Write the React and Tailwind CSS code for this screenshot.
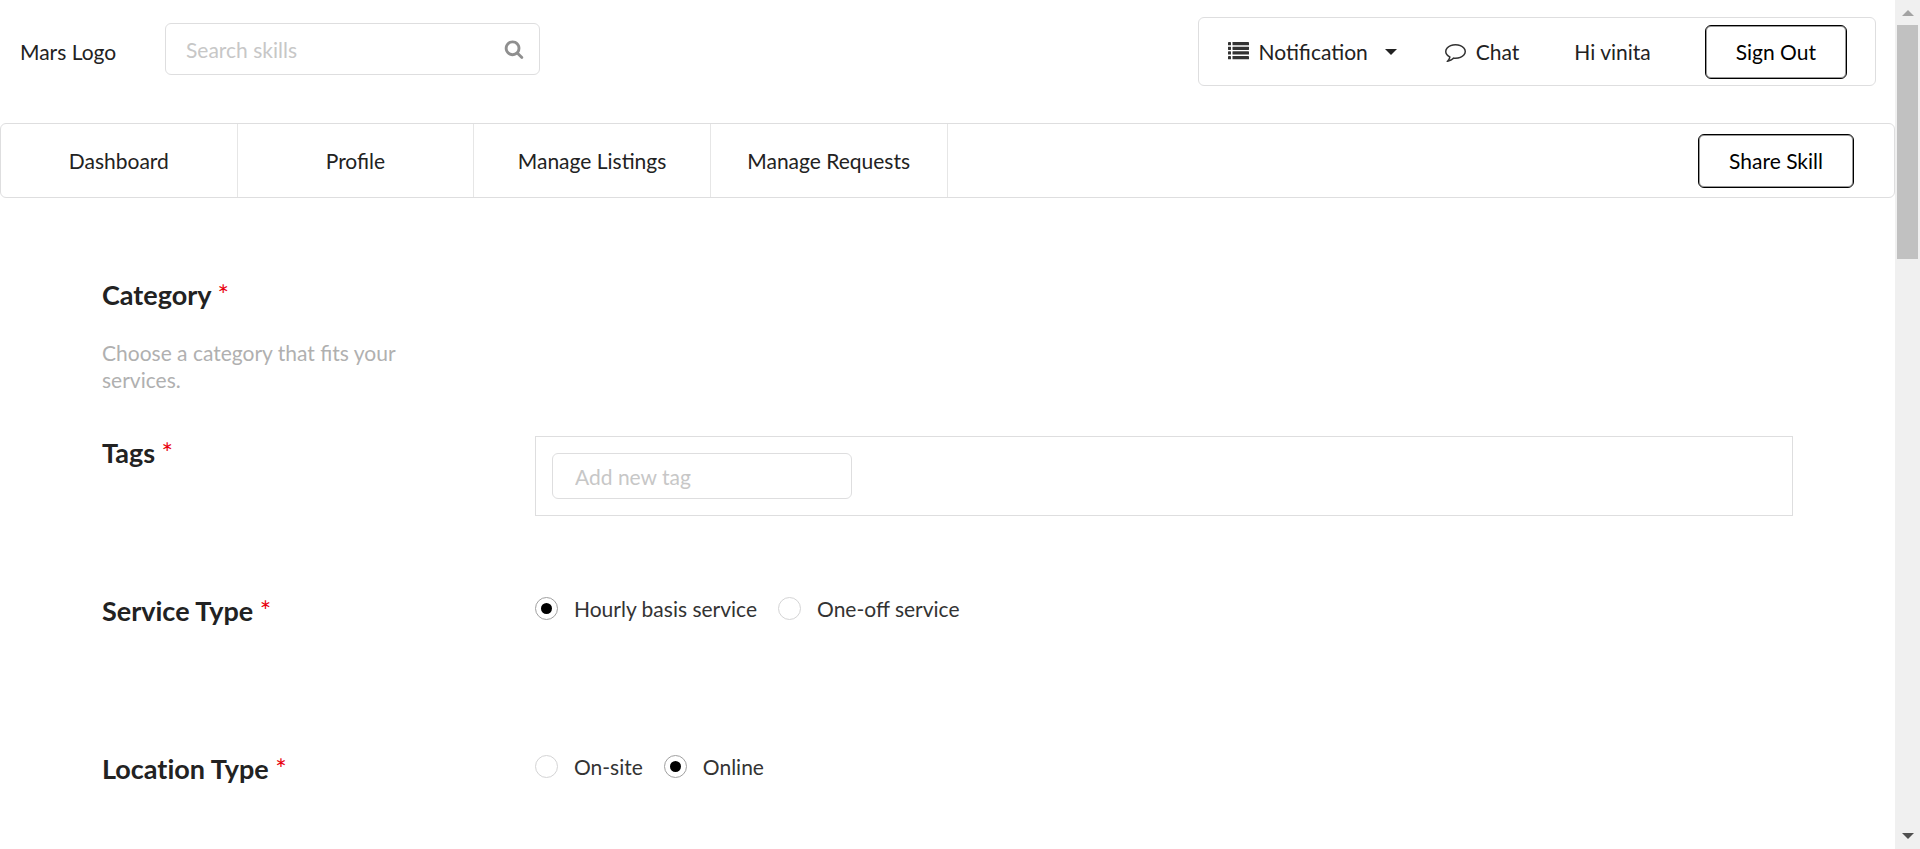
import React from "react";

function ListIcon() {
  return (
    <svg viewBox="0 0 21 21" className="size-[21px] shrink-0 text-[#333]" fill="currentColor" aria-hidden="true">
      {[1, 5.7, 10.3, 15].map((y) => (
        <g key={y}>
          <rect x="0" y={y} width="3" height="3.3" rx="0.4" />
          <rect x="4.5" y={y} width="16.5" height="3.3" rx="0.4" />
        </g>
      ))}
    </svg>
  );
}

function CommentIcon() {
  return (
    <svg viewBox="0 0 1792 1792" className="size-[21px] shrink-0 text-[#333]" fill="currentColor" aria-hidden="true">
      <path d="M896 384q-204 0-381.5 69.5t-282 187.5-104.5 255q0 112 71.5 213.5t201.5 175.5l87 50-27 96q-24 91-70 172 152-63 275-171l43-38 57 6q69 8 130 8 204 0 381.5-69.5t282-187.5 104.5-255-104.5-255-282-187.5-381.5-69.5zm896 512q0 174-120 321.5t-326 233-450 85.5q-70 0-145-8-198 175-460 242-49 14-114 22h-5q-15 0-27-10.5t-16-27.5v-1q-3-4-.5-12t2-10 4.5-9.5l6-9 7-8.5 8-9q7-8 31-34.5t34.5-38 31-39.5 32.5-51 27-59 26-76q-157-89-247.5-220t-90.5-281q0-174 120-321.5t326-233 450-85.5 450 85.5 326 233 120 321.5z" />
    </svg>
  );
}

function SearchIcon() {
  return (
    <svg viewBox="0 0 1792 1792" className="size-[20px]" fill="currentColor" aria-hidden="true">
      <path d="M1216 832q0-185-131.5-316.5t-316.5-131.5-316.5 131.5-131.5 316.5 131.5 316.5 316.5 131.5 316.5-131.5 131.5-316.5zm512 832q0 52-38 90t-90 38q-54 0-90-38l-343-342q-179 124-399 124-143 0-273.5-55.5t-225-150-150-225-55.5-273.5 55.5-273.5 150-225 225-150 273.5-55.5 273.5 55.5 225 150 150 225 55.5 273.5q0 220-124 399l343 343q37 37 37 90z" />
    </svg>
  );
}

function OutlineButton({ children }) {
  return (
    <button type="button" className="h-[54px] rounded-md border border-black px-[30px] text-black ring-1 ring-inset ring-black/40">
      {children}
    </button>
  );
}

function Header() {
  return (
    <header className="flex items-start pl-5 pr-[19px] pt-[17px]">
      <a href="#home" className="flex h-[68px] w-[145px] items-center">Mars Logo</a>
      <div className="mt-[6px] flex h-[52px] w-[375px] items-center rounded-md border border-[#dededf] pl-5 pr-[15px]">
        <input
          type="text"
          aria-label="Search skills"
          placeholder="Search skills"
          className="min-w-0 flex-1 bg-transparent outline-none placeholder:text-[#c7c7c7]"
        />
        <button type="button" aria-label="Search" className="text-[#8f8f8f]">
          <SearchIcon />
        </button>
      </div>
      <div className="ml-auto flex h-[69px] items-center rounded-md border border-[#dededf] pl-[29px] pr-[28px]">
        <button type="button" className="flex items-center">
          <ListIcon />
          <span className="ml-[10px]">Notification</span>
          <svg viewBox="0 0 12 6" className="ml-[17px] h-[6px] w-[12px]" fill="currentColor" aria-hidden="true">
            <path d="M0 0h12L6 6z" />
          </svg>
        </button>
        <a href="#chat" className="ml-12 flex items-center gap-[10px]">
          <CommentIcon />
          Chat
        </a>
        <span className="ml-[55px] mr-[54px]">Hi vinita</span>
        <OutlineButton>Sign Out</OutlineButton>
      </div>
    </header>
  );
}

const tabs = ["Dashboard", "Profile", "Manage Listings", "Manage Requests"];

function Nav() {
  return (
    <nav className="mt-[37px] flex h-[75px] items-center rounded-md border border-[#dededf]">
      {tabs.map((tab) => (
        <a
          key={tab}
          href="#tab"
          className="flex h-full w-1/8 items-center justify-center border-r border-[#e6e6e6]"
        >
          {tab}
        </a>
      ))}
      <div className="ml-auto mr-10">
        <OutlineButton>Share Skill</OutlineButton>
      </div>
    </nav>
  );
}

function Row({ title, note, children }) {
  return (
    <section className="flex items-start not-last:h-[158px]">
      <div className="w-[433px] shrink-0 pr-24">
        <h3 className="text-[27px] font-bold leading-[34px] [font-variant-ligatures:none]">
          {title} <span className="font-normal text-[#e8000d]">*</span>
        </h3>
        {note && <p className="mt-[27px] text-[#b0b0b0]">{note}</p>}
      </div>
      <div className="flex-1">{children}</div>
    </section>
  );
}

function RadioGroup({ name, options, selected }) {
  return (
    <div className="flex gap-[21px] pt-px">
      {options.map((option) => (
        <label key={option} className="flex items-center gap-4 text-[#333]">
          <input
            type="radio"
            name={name}
            defaultChecked={option === selected}
            className="grid size-[23px] appearance-none place-content-center rounded-full border border-[#d4d4d5] checked:border-[#a0a0a0] checked:before:size-[11px] checked:before:rounded-full checked:before:bg-black checked:before:content-['']"
          />
          {option}
        </label>
      ))}
    </div>
  );
}

function Scrollbar() {
  return (
    <div className="sticky top-0 flex h-screen w-[25px] shrink-0 flex-col items-center bg-[#f0f0f0]" aria-hidden="true">
      <div className="flex h-[25px] items-center text-[#a3a3a3]">
        <svg viewBox="0 0 12 6" className="h-[6px] w-[12px]" fill="currentColor">
          <path d="M6 0l6 6H0z" />
        </svg>
      </div>
      <div className="h-[234px] w-[21px] bg-[#c1c1c1]" />
      <div className="mt-auto flex h-[27px] items-center text-[#505050]">
        <svg viewBox="0 0 12 6" className="h-[6px] w-[12px]" fill="currentColor">
          <path d="M0 0h12L6 6z" />
        </svg>
      </div>
    </div>
  );
}

export default function App() {
  return (
    <div className="flex min-h-screen items-start bg-white font-['Lato',sans-serif] text-[21px] leading-[27px] text-[#222]">
      <div className="min-w-0 flex-1">
        <Header />
        <Nav />
        <main className="px-[102px] pt-[80px]">
          <Row title="Category" note="Choose a category that fits your services." />
          <Row title="Tags">
            <div className="border border-[#dededf] p-4">
              <input
                type="text"
                aria-label="Add new tag"
                placeholder="Add new tag"
                className="block h-[46px] w-[300px] rounded-md border border-[#dededf] px-[22px] outline-none placeholder:text-[#c7c7c7]"
              />
            </div>
          </Row>
          <Row title="Service Type">
            <RadioGroup
              name="service"
              options={["Hourly basis service", "One-off service"]}
              selected="Hourly basis service"
            />
          </Row>
          <Row title="Location Type">
            <RadioGroup name="location" options={["On-site", "Online"]} selected="Online" />
          </Row>
        </main>
      </div>
      <Scrollbar />
    </div>
  );
}
